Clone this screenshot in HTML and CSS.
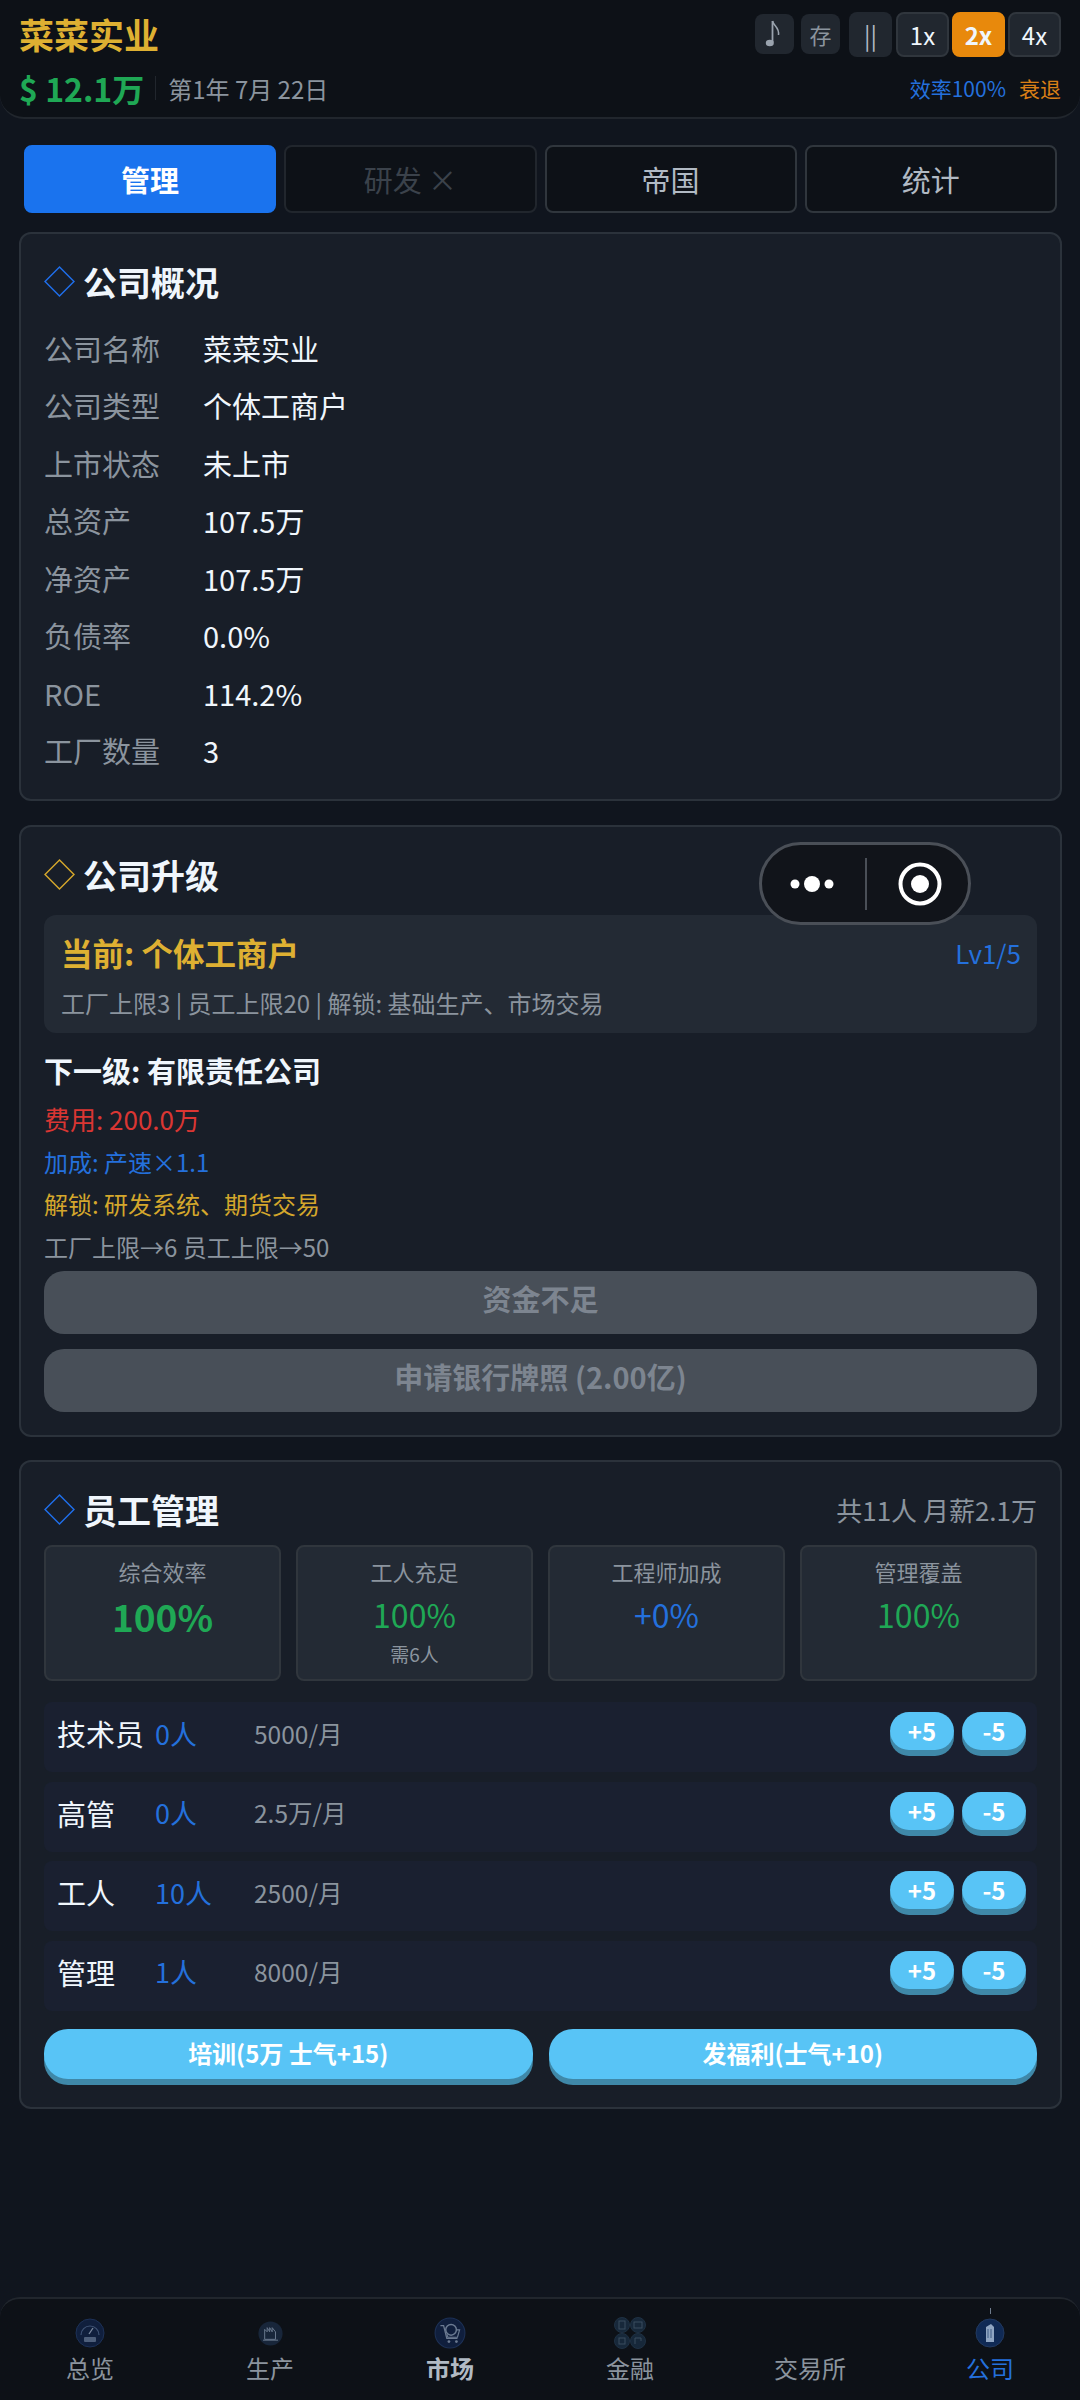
FILE: index.html
```html
<!DOCTYPE html>
<html lang="zh">
<head>
  <meta charset="UTF-8">
  <title>菜菜实业</title>
  <link rel="stylesheet" href="styles.css">
</head>
<body>
  <header class="top">
    <div class="top-row">
      <div class="company">菜菜实业</div>
      <div class="controls">
        <span class="ctl ctl-small ctl-note"><svg class="note" viewBox="0 0 20 30"><path d="M7.5 2v21.5" stroke="#9aa3ae" stroke-width="1.8" fill="none"/><path d="M7.5 2c1 5 7 6 6 14" stroke="#9aa3ae" stroke-width="1.5" fill="none"/><ellipse cx="4.8" cy="24" rx="4" ry="3.2" fill="#9aa3ae"/></svg></span>
        <span class="ctl ctl-small ctl-save">存</span>
        <span class="ctl ctl-pause">||</span>
        <span class="ctl ctl-speed">1x</span>
        <span class="ctl ctl-speed active">2x</span>
        <span class="ctl ctl-speed">4x</span>
      </div>
    </div>
    <div class="top-row second">
      <div class="money">$ 12.1万</div>
      <i class="sep"></i>
      <div class="date">第1年 7月 22日</div>
      <div class="status"><span class="blue">效率100%</span><span class="orange">衰退</span></div>
    </div>
  </header>

  <nav class="tabs">
    <div class="tab active">管理</div>
    <div class="tab disabled">研发 ×</div>
    <div class="tab">帝国</div>
    <div class="tab">统计</div>
  </nav>

  <section class="card card-info">
    <h2 class="card-title"><svg class="diamond" viewBox="0 0 30 30"><path d="M15 1 L29 15 L15 29 L1 15 Z" fill="none" stroke="#1f6feb" stroke-width="1.4"/></svg>公司概况</h2>
    <div class="info-row"><span>公司名称</span><b>菜菜实业</b></div>
    <div class="info-row"><span>公司类型</span><b>个体工商户</b></div>
    <div class="info-row"><span>上市状态</span><b>未上市</b></div>
    <div class="info-row"><span>总资产</span><b>107.5万</b></div>
    <div class="info-row"><span>净资产</span><b>107.5万</b></div>
    <div class="info-row"><span>负债率</span><b>0.0%</b></div>
    <div class="info-row"><span>ROE</span><b>114.2%</b></div>
    <div class="info-row"><span>工厂数量</span><b>3</b></div>
  </section>

  <section class="card card-upgrade">
    <h2 class="card-title"><svg class="diamond" viewBox="0 0 30 30"><path d="M15 1 L29 15 L15 29 L1 15 Z" fill="none" stroke="#d4a72c" stroke-width="1.4"/></svg>公司升级</h2>
    <div class="capsule">
      <svg class="capsule-dots" viewBox="0 0 44 22"><circle cx="5" cy="11" r="4.5"/><circle cx="22" cy="11" r="8"/><circle cx="39" cy="11" r="4.5"/></svg>
      <i class="capsule-line"></i>
      <svg class="capsule-rec" viewBox="0 0 44 44"><circle cx="22" cy="22" r="19.5" fill="none" stroke="#fff" stroke-width="4"/><circle cx="22" cy="22" r="9" fill="#fff"/></svg>
    </div>
    <div class="current">
      <div class="current-head"><strong>当前: 个体工商户</strong><span>Lv1/5</span></div>
      <div class="current-sub">工厂上限3 | 员工上限20 | 解锁: 基础生产、市场交易</div>
    </div>
    <div class="next-title">下一级: 有限责任公司</div>
    <div class="next-line next-cost red">费用: 200.0万</div>
    <div class="next-line blue">加成: 产速×1.1</div>
    <div class="next-line gold">解锁: 研发系统、期货交易</div>
    <div class="next-line gray">工厂上限→6 员工上限→50</div>
    <div class="btn-off">资金不足</div>
    <div class="btn-off">申请银行牌照 (2.00亿)</div>
  </section>

  <section class="card card-staff">
    <div class="staff-head">
      <h2 class="card-title"><svg class="diamond" viewBox="0 0 30 30"><path d="M15 1 L29 15 L15 29 L1 15 Z" fill="none" stroke="#1f6feb" stroke-width="1.4"/></svg>员工管理</h2>
      <span class="staff-total">共11人 月薪2.1万</span>
    </div>
    <div class="stats">
      <div class="stat"><div class="stat-label">综合效率</div><div class="stat-main">100%</div></div>
      <div class="stat"><div class="stat-label">工人充足</div><div class="stat-value green">100%</div><div class="stat-note">需6人</div></div>
      <div class="stat"><div class="stat-label">工程师加成</div><div class="stat-value blue">+0%</div></div>
      <div class="stat"><div class="stat-label">管理覆盖</div><div class="stat-value green">100%</div></div>
    </div>
    <div class="staff-row"><span class="staff-name">技术员</span><span class="staff-count">0人</span><span class="staff-pay">5000/月</span><span class="pill">+5</span><span class="pill">-5</span></div>
    <div class="staff-row"><span class="staff-name">高管</span><span class="staff-count">0人</span><span class="staff-pay">2.5万/月</span><span class="pill">+5</span><span class="pill">-5</span></div>
    <div class="staff-row"><span class="staff-name">工人</span><span class="staff-count">10人</span><span class="staff-pay">2500/月</span><span class="pill">+5</span><span class="pill">-5</span></div>
    <div class="staff-row"><span class="staff-name">管理</span><span class="staff-count">1人</span><span class="staff-pay">8000/月</span><span class="pill">+5</span><span class="pill">-5</span></div>
    <div class="actions">
      <div class="action">培训(5万 士气+15)</div>
      <div class="action">发福利(士气+10)</div>
    </div>
  </section>

  <footer class="bottom">
    <div class="nav-item">
      <svg class="nav-icon" viewBox="0 0 30 30"><circle cx="15" cy="15" r="14" fill="#101f3d" stroke="#1d3156"/><path d="M6 17a9 9 0 0 1 18 0" fill="none" stroke="#3f5375" stroke-width="1.2"/><path d="M14 16l4-6" stroke="#7c8aa0" stroke-width="1.3"/><rect x="9" y="19" width="12" height="5" rx="1" fill="#4e5f7b"/></svg>
      <span>总览</span>
    </div>
    <div class="nav-item">
      <svg class="nav-icon nav-icon-small" viewBox="0 0 30 30"><circle cx="15" cy="15" r="14.5" fill="#18263a"/><path d="M8 22V10l3 3V8l3 5V8l3 5V8l4 5v9z" fill="none" stroke="#68778c" stroke-width="1.2"/><path d="M6 23h18" stroke="#68778c" stroke-width="1.2"/></svg>
      <span>生产</span>
    </div>
    <div class="nav-item nav-bold">
      <svg class="nav-icon nav-icon-large" viewBox="0 0 30 30"><circle cx="15" cy="15" r="14" fill="#101f3d" stroke="#1d3156"/><path d="M6 8h3l3 12h10" fill="none" stroke="#6b7a91" stroke-width="1.2"/><circle cx="16" cy="12" r="5" fill="none" stroke="#6b7a91" stroke-width="1.4"/><path d="M12 16l1 3h9l2-7h-3" fill="none" stroke="#6b7a91" stroke-width="1.1"/><circle cx="14" cy="23" r="1.3" fill="#6b7a91"/><circle cx="21" cy="23" r="1.3" fill="#6b7a91"/></svg>
      <span>市场</span>
    </div>
    <div class="nav-item">
      <svg class="nav-icon nav-icon-wide" viewBox="0 0 34 34"><g fill="#17283a" stroke="#1f3143"><circle cx="9" cy="9" r="7.5"/><circle cx="25" cy="9" r="7.5"/><circle cx="9" cy="25" r="7.5"/><circle cx="25" cy="25" r="7.5"/></g><g fill="none" stroke="#3b4d5f" stroke-width="1"><rect x="6" y="5" width="6" height="8"/><rect x="21" y="6" width="8" height="6"/><rect x="6" y="22" width="6" height="6"/><path d="M22 28v-6h6v3"/></g></svg>
      <span>金融</span>
    </div>
    <div class="nav-item">
      <span class="nav-icon"></span>
      <span>交易所</span>
    </div>
    <div class="nav-item nav-active">
      <i class="nav-tick"></i>
      <svg class="nav-icon" viewBox="0 0 30 30"><circle cx="15" cy="15" r="14" fill="#102a55" stroke="#22395f"/><path d="M11 24V9l5-3 3 3v15z" fill="#8fa5c2"/><path d="M13 11v9M16 11v9" stroke="#3f5c85" stroke-width="1"/></svg>
      <span>公司</span>
    </div>
  </footer>
</body>
</html>
```

FILE: styles.css
```css
html, body {
  margin: 0;
  padding: 0;
}

body {
  width: 1080px;
  height: 2400px;
  position: relative;
  overflow: hidden;
  background-color: #10151e;
  color: #f0f6fc;
  font-family: "Noto Sans CJK SC", "Noto Sans", sans-serif;
}

/* top bar */
.top {
  height: 119px;
  box-sizing: border-box;
  padding: 11px 19px 0;
  background-color: #0d1117;
  border-bottom: 2px solid #21262d;
  border-radius: 0 0 24px 24px;
}

.top-row {
  display: flex;
  justify-content: space-between;
  align-items: center;
  height: 46px;
}

.top-row.second {
  margin-top: 8px;
  justify-content: flex-start;
}

.company {
  font-size: 35px;
  font-weight: 700;
  color: #deb032;
  line-height: 46px;
}

.controls {
  display: flex;
  align-items: center;
}

.ctl {
  box-sizing: border-box;
  display: flex;
  align-items: center;
  justify-content: center;
  height: 45px;
  background-color: #21272f;
  border: 2px solid #30363d;
  border-radius: 8px;
  color: #f0f6fc;
  font-size: 24px;
}

.ctl-small {
  width: 39px;
  height: 40px;
  border: 0;
  color: #8b949e;
}

.ctl-note {
  margin-right: 7px;
}

.note {
  width: 20px;
  height: 30px;
}

.ctl-save {
  margin-right: 9px;
  font-size: 22px;
}

.ctl-pause {
  width: 43px;
  margin-right: 4px;
  color: #b1bac4;
  border: 0;
}

.ctl-speed {
  width: 53px;
  margin-left: 3px;
}

.ctl-pause + .ctl-speed {
  margin-left: 0;
}

.ctl-speed.active {
  background-color: #e8890c;
  border-color: #e8890c;
  font-weight: 700;
}

.money {
  font-size: 32px;
  font-weight: 700;
  color: #1fa855;
  line-height: 38px;
}

.sep {
  width: 1px;
  height: 24px;
  margin: 0 12px 0 11px;
  background-color: #21262d;
}

.date {
  font-size: 24px;
  color: #8b949e;
}

.status {
  margin-left: auto;
  font-size: 21px;
}

.status .orange {
  margin-left: 13px;
}

.blue { color: #2470dc; }
.orange { color: #d97f16; }
.red { color: #da3633; }
.gold { color: #d4a72c; }
.gray { color: #8b949e; }
.green { color: #1fa855; }

/* tabs */
.tabs {
  display: grid;
  grid-template-columns: repeat(4, 1fr);
  gap: 8px;
  margin: 26px 23px 0 24px;
}

.tab {
  box-sizing: border-box;
  height: 68px;
  line-height: 64px;
  text-align: center;
  font-size: 29px;
  color: #b1bac4;
  background-color: #0d1117;
  border: 2px solid #30363d;
  border-radius: 8px;
}

.tab.active {
  background-color: #1a73ee;
  border-color: #1a73ee;
  color: #fff;
  font-weight: 700;
}

.tab.disabled {
  color: #3b424b;
  border-color: #21262d;
}

/* cards */
.card {
  box-sizing: border-box;
  margin: 0 18px 0 19px;
  padding: 24px 23px 0;
  background-color: #181e28;
  border: 2px solid #2b323b;
  border-radius: 12px;
}

.card-info {
  height: 569px;
  margin-top: 19px;
}

.card-upgrade {
  position: relative;
  height: 612px;
  margin-top: 24px;
}

.card-staff {
  height: 649px;
  margin-top: 23px;
}

.card-title {
  display: flex;
  align-items: center;
  margin: 0;
  height: 46px;
  font-size: 34px;
  font-weight: 700;
  color: #f0f6fc;
}

.diamond {
  width: 31px;
  height: 31px;
  margin-right: 8px;
  flex: none;
}

.info-row {
  display: flex;
  align-items: center;
  height: 57.5px;
  font-size: 29px;
}

.card-title + .info-row {
  margin-top: 15px;
}

.info-row span {
  width: 159px;
  color: #8b949e;
}

.info-row b {
  font-weight: 400;
  color: #f0f6fc;
}

/* wechat capsule */
.capsule {
  position: absolute;
  left: 738px;
  top: 15px;
  width: 212px;
  height: 83px;
  box-sizing: border-box;
  display: flex;
  align-items: center;
  background-color: #11141a;
  border: 3px solid #4a4f57;
  border-radius: 42px;
}

.capsule-dots {
  width: 44px;
  height: 22px;
  margin-left: 28px;
  fill: #fff;
}

.capsule-line {
  width: 2px;
  height: 52px;
  margin-left: 31px;
  background-color: #4a4f57;
}

.capsule-rec {
  width: 44px;
  height: 44px;
  margin-left: 31px;
}

/* upgrade */
.current {
  height: 118px;
  box-sizing: border-box;
  margin-top: 18px;
  padding: 12px 16px 0 17px;
  background-color: #232a34;
  border-radius: 12px;
}

.current-head {
  display: flex;
  justify-content: space-between;
  align-items: center;
  height: 50px;
}

.current-head strong {
  font-size: 31.5px;
  color: #deb032;
}

.current-head span {
  font-size: 26px;
  color: #2470dc;
}

.current-sub {
  margin-top: 8px;
  font-size: 24px;
  color: #8b949e;
  line-height: 36px;
}

.next-title {
  margin-top: 17px;
  font-size: 29px;
  font-weight: 700;
  line-height: 40px;
}

.next-line {
  font-size: 24px;
  line-height: 42.5px;
}

.next-cost {
  font-size: 26px;
  margin-top: 8px;
}

.btn-off {
  height: 63px;
  line-height: 55px;
  margin-top: 15px;
  text-align: center;
  font-size: 29px;
  font-weight: 700;
  color: #7d8590;
  background-color: #484f58;
  border-radius: 20px;
}

.next-line + .btn-off {
  margin-top: 3px;
}

/* staff */
.staff-head {
  display: flex;
  justify-content: space-between;
  align-items: center;
}

.staff-total {
  font-size: 26px;
  color: #8b949e;
}

.stats {
  display: grid;
  grid-template-columns: repeat(4, 1fr);
  gap: 15px;
  margin-top: 13px;
}

.stat {
  box-sizing: border-box;
  height: 136px;
  padding-top: 9px;
  text-align: center;
  background-color: #232a34;
  border: 2px solid #30363d;
  border-radius: 8px;
}

.stat-label {
  font-size: 22px;
  line-height: 30px;
  color: #8b949e;
}

.stat-main {
  margin-top: 5px;
  font-size: 37px;
  font-weight: 700;
  line-height: 50px;
  color: #1fa855;
}

.stat-value {
  margin-top: 5px;
  font-size: 32px;
  line-height: 46px;
}

.stat-note {
  margin-top: 2px;
  font-size: 19px;
  line-height: 30px;
  color: #8b949e;
}

.staff-row {
  box-sizing: border-box;
  display: flex;
  align-items: center;
  height: 70px;
  margin-top: 9.5px;
  padding: 0 11px 8px 13px;
  background-color: #1a2030;
  border-radius: 8px;
}

.stats + .staff-row {
  margin-top: 21px;
}

.staff-name {
  width: 98px;
  font-size: 29px;
  color: #f0f6fc;
}

.staff-count {
  width: 99px;
  font-size: 27px;
  color: #2470dc;
}

.staff-pay {
  font-size: 24.5px;
  color: #8b949e;
  margin-right: auto;
}

.pill {
  width: 64px;
  height: 38px;
  margin: 0 0 4px 8px;
  line-height: 38px;
  text-align: center;
  font-size: 24px;
  font-weight: 700;
  color: #fff;
  background-color: #58c4f6;
  border-radius: 19px;
  box-shadow: 0 6px 0 #3f88a8;
}

.actions {
  display: grid;
  grid-template-columns: 1fr 1fr;
  gap: 16px;
  margin-top: 18.5px;
}

.action {
  height: 50px;
  line-height: 48px;
  text-align: center;
  font-size: 24px;
  font-weight: 700;
  color: #fff;
  background-color: #58c4f6;
  border-radius: 24px;
  box-shadow: 0 6px 0 #3f88a8;
}

/* bottom nav */
.bottom {
  position: absolute;
  left: 0;
  right: 0;
  bottom: 0;
  height: 103px;
  box-sizing: border-box;
  display: grid;
  grid-template-columns: repeat(6, 1fr);
  background-color: #0d1117;
  border-top: 2px solid #21262d;
  border-radius: 20px 20px 0 0;
}

.nav-item {
  position: relative;
  display: flex;
  flex-direction: column;
  align-items: center;
  padding-top: 19px;
  font-size: 24px;
  color: #8b949e;
}

.nav-item span:last-child {
  line-height: 34px;
  margin-top: 3px;
}

.nav-icon {
  display: block;
  width: 30px;
  height: 30px;
}

.nav-icon-small {
  width: 25px;
  height: 25px;
  margin: 2.5px 0;
}

.nav-icon-large {
  width: 32px;
  height: 32px;
  margin: -1px 0;
}

.nav-icon-wide {
  width: 34px;
  height: 34px;
  margin: -2px 0;
}

.nav-bold {
  color: #b1bac4;
  font-weight: 700;
}

.nav-active {
  color: #2470dc;
}

.nav-tick {
  position: absolute;
  top: 9px;
  left: 50%;
  width: 1px;
  height: 6px;
  background-color: #6e7b8c;
}
```
